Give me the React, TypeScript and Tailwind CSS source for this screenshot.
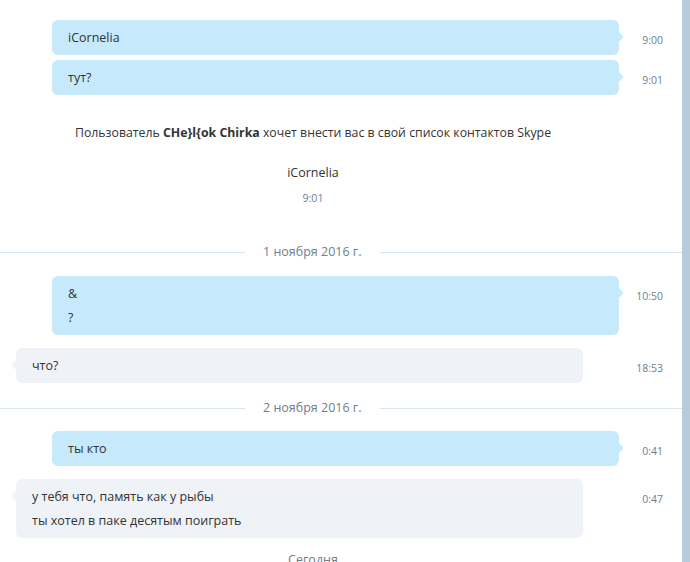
const font = { fontFamily: '"Open Sans", "Noto Sans", sans-serif' };

function Tail({ side, color }: { side: 'left' | 'right'; color: string }) {
  return (
    <svg
      width="6"
      height="16"
      viewBox="0 0 6 16"
      className={side === 'right' ? 'absolute right-[-5px] top-[9px]' : 'absolute left-[-5px] top-[9px] -scale-x-100'}
    >
      <path d="M0 0 C0 4 5 5.5 5 8 C5 10.5 0 12 0 16 Z" fill={color} />
    </svg>
  );
}

function Outgoing({ lines, time, className }: { lines: string[]; time: string; className?: string }) {
  return (
    <div className={`flex items-start ${className ?? ''}`}>
      <div className="relative ml-[52px] w-[567px] rounded-[6px] bg-[#c6eafb] pl-[16px] pt-[6px] pb-[5px]">
        {lines.map((l, i) => (
          <div key={i} className="text-[12.5px] leading-[24px] text-[#333]">
            {l}
          </div>
        ))}
        <Tail side="right" color="#c6eafb" />
      </div>
      <div className="flex-1 pt-[8px] pr-[19px] text-right text-[10.5px] leading-[24px] text-[#6f7e8e]">{time}</div>
    </div>
  );
}

function Incoming({ lines, time, className }: { lines: string[]; time: string; className?: string }) {
  return (
    <div className={`flex items-start ${className ?? ''}`}>
      <div className="relative ml-[16px] w-[567px] rounded-[6px] bg-[#eff2f7] pl-[16px] pt-[6px] pb-[5px]">
        {lines.map((l, i) => (
          <div key={i} className="text-[12.5px] leading-[24px] text-[#333]">
            {l}
          </div>
        ))}
        <Tail side="left" color="#eff2f7" />
      </div>
      <div className="flex-1 pt-[8px] pr-[19px] text-right text-[10.5px] leading-[24px] text-[#6f7e8e]">{time}</div>
    </div>
  );
}

function DateDivider({ label, className }: { label: string; className?: string }) {
  return (
    <div className={`flex h-[24px] items-center ${className ?? ''}`}>
      <div className="h-px w-[245px] bg-[#d9e6ef]" />
      <div className="px-[18px] text-[12.5px] text-[#6f7e8e]">{label}</div>
      <div className="h-px flex-1 bg-[#d9e6ef]" />
    </div>
  );
}

export default function App() {
  const sender = 'CHe}l{ok Chirka';
  return (
    <div className="flex h-[562px] w-[690px] overflow-hidden bg-white" style={font}>
      <div className="flex-1 pt-[20px]">
        <Outgoing lines={['iCornelia']} time="9:00" />
        <Outgoing lines={['тут?']} time="9:01" className="mt-[5px]" />

        <div className="mt-[26px] w-[626px] text-center text-[12.3px] leading-[24px] text-[#333]">
          Пользователь <b className="font-bold">{sender}</b> хочет внести вас в свой список контактов Skype
        </div>
        <div className="mt-[16px] w-[626px] text-center text-[12.5px] leading-[24px] text-[#333]">iCornelia</div>
        <div className="mt-[5px] w-[626px] text-center text-[10.5px] leading-[16px] text-[#6f7e8e]">9:01</div>

        <DateDivider label="1 ноября 2016 г." className="mt-[34px]" />
        <Outgoing lines={['&', '?']} time="10:50" className="mt-[12px]" />
        <Incoming lines={['что?']} time="18:53" className="mt-[13px]" />

        <DateDivider label="2 ноября 2016 г." className="mt-[13px]" />
        <Outgoing lines={['ты кто']} time="0:41" className="mt-[11px]" />
        <Incoming
          lines={['у тебя что, память как у рыбы', 'ты хотел в паке десятым поиграть']}
          time="0:47"
          className="mt-[13px]"
        />

        <div className="mt-[10px] w-[626px] text-center text-[12.5px] leading-[24px] text-[#6f7e8e]">Сегодня</div>
      </div>
      <div className="h-full w-[8px] bg-[#b6cbdc]" />
    </div>
  );
}
